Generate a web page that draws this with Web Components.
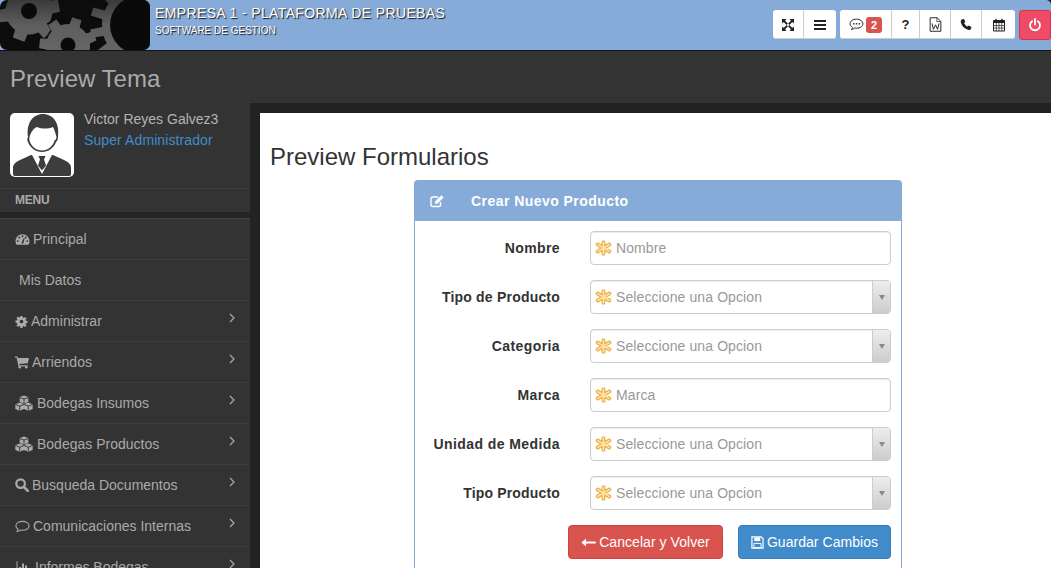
<!DOCTYPE html>
<html lang="es">
<head>
<meta charset="UTF-8">
<title>Preview Tema</title>
<style>
  html, body { margin: 0; height: 100%; overflow: hidden; background: #222; }
  body { font: 14px "Liberation Sans", Arial, sans-serif; color: #333; }
</style>
</head>
<body>
<app-shell>
  <app-header slot="header" title-text="EMPRESA 1 - PLATAFORMA DE PRUEBAS" subtitle="SOFTWARE DE GESTION"></app-header>
  <page-title slot="title">Preview Tema</page-title>
  <side-menu slot="side" user="Victor Reyes Galvez3" role="Super Administrador">
    <menu-item icon="dashboard" gap="3">Principal</menu-item>
    <menu-item pad="19">Mis Datos</menu-item>
    <menu-item icon="cog" gap="3" arrow>Administrar</menu-item>
    <menu-item icon="cart" gap="3" arrow>Arriendos</menu-item>
    <menu-item icon="cubes" gap="4" arrow>Bodegas Insumos</menu-item>
    <menu-item icon="cubes" gap="4" arrow>Bodegas Productos</menu-item>
    <menu-item icon="search" gap="3" arrow>Busqueda Documentos</menu-item>
    <menu-item icon="comment" gap="3" arrow>Comunicaciones Internas</menu-item>
    <menu-item icon="chart" gap="4" arrow>Informes Bodegas</menu-item>
  </side-menu>
  <form-page heading="Preview Formularios">
    <form-panel heading="Crear Nuevo Producto">
      <form-field label="Nombre" placeholder="Nombre"></form-field>
      <form-field label="Tipo de Producto" spacing=".2" placeholder="Seleccione una Opcion" select></form-field>
      <form-field label="Categoria" placeholder="Seleccione una Opcion" select></form-field>
      <form-field label="Marca" placeholder="Marca"></form-field>
      <form-field label="Unidad de Medida" spacing=".42" placeholder="Seleccione una Opcion" select></form-field>
      <form-field label="Tipo Producto" spacing=".17" placeholder="Seleccione una Opcion" select></form-field>
      <div slot="actions">
        <action-button kind="danger" icon="arrowleft">Cancelar y Volver</action-button>
        <action-button kind="primary" icon="save">Guardar Cambios</action-button>
      </div>
    </form-panel>
  </form-page>
</app-shell>

<script>
const ICONS = {
  expand: '<path d="M1 1h4.600L4 2.700l2.900 2.900L5.600 6.900 2.700 4 1 5.600zM13 1v4.600L11.300 4 8.400 6.900 7.100 5.600 10 2.700 8.400 1zM1 13V8.400L2.700 10l2.900-2.900 1.300 1.300L4 11.300 5.600 13zM13 13H8.400l1.600-1.700-2.900-2.900 1.300-1.300 2.900 2.900L13 8.400z"/>',
  bars: '<rect x="1" y="2" width="12" height="2"/><rect x="1" y="6" width="12" height="2"/><rect x="1" y="10" width="12" height="2"/>',
  bubble: '<path d="M7 2C3.600 2 1 3.900 1 6.300c0 1.400.9 2.600 2.300 3.400-.1.8-.5 1.500-1 2 1.200-.2 2.200-.7 3-1.400.5.100 1.100.2 1.700.2 3.400 0 6-1.900 6-4.200S10.400 2 7 2z" fill="none" stroke="currentColor" stroke-width=".9"/><circle cx="4.400" cy="6.300" r=".8"/><circle cx="7" cy="6.300" r=".8"/><circle cx="9.600" cy="6.300" r=".8"/>',
  word: '<path d="M2 .7h6.500l3.500 3.400v9.200H2z" fill="none" stroke="currentColor" stroke-width=".9"/><path d="M8.300.7v3.600H12" fill="none" stroke="currentColor" stroke-width=".7"/><path d="M3.700 6l1.400 5.500 1.900-4.200 1.900 4.200L10.300 6" fill="none" stroke="currentColor" stroke-width=".9"/>',
  phone: '<path d="M3.300 1.300 5 .9l1.400 3-1.300 1c.6 1.500 1.800 2.900 3.300 3.700l1.200-1.200 2.900 1.600-.5 1.800c-.3.900-1.200 1.500-2.200 1.300C5.500 11.200 2.300 7.600 1.700 3.600c-.2-1 .6-2 1.600-2.300z"/>',
  calendar: '<path d="M1.500 2.500h11v10.500h-11z" fill="none" stroke="currentColor"/><rect x="1.500" y="2.500" width="11" height="2.500"/><rect x="3.300" y=".8" width="1.400" height="2.600"/><rect x="9.300" y=".8" width="1.400" height="2.600"/><path d="M1.500 7.500h11M1.500 10h11M4.300 5v8M7 5v8M9.700 5v8" stroke="currentColor" stroke-width=".7" fill="none"/>',
  power: '<path d="M4.100 3.200a5 5 0 1 0 5.800 0" fill="none" stroke="currentColor" stroke-width="1.800" stroke-linecap="round"/><path d="M7 1v5.500" stroke="currentColor" stroke-width="1.800" stroke-linecap="round"/>',
  dashboard: '<path d="M7 2C3.300 2 .5 4.900.5 8.600c0 1.100.2 2 .7 2.900.1.200.3.300.5.300h10.600c.2 0 .4-.1.500-.3.500-.9.700-1.800.7-2.900C13.500 4.900 10.700 2 7 2z"/><g fill="#333"><circle cx="2.600" cy="8.500" r=".9"/><circle cx="4" cy="5.200" r=".9"/><circle cx="7" cy="3.900" r=".9"/><circle cx="11.400" cy="8.500" r=".9"/><circle cx="10" cy="5.200" r=".9"/><path d="M6 10.300 8.200 5.500l.8.300L7.700 11z"/></g>',
  cog: '<path d="M5.900 1h2.200l.3 1.700 1 .4 1.400-1 1.600 1.600-1 1.400.4 1 1.700.3v2.200l-1.700.3-.4 1 1 1.400-1.600 1.600-1.400-1-1 .4-.3 1.700H5.900l-.3-1.700-1-.4-1.400 1-1.600-1.600 1-1.400-.4-1L.5 8.100V5.900l1.700-.3.4-1-1-1.400 1.600-1.600 1.400 1 1-.4zM7 5a2 2 0 1 0 0 4 2 2 0 0 0 0-4z" fill-rule="evenodd"/>',
  cart: '<path d="M0 1.500h2.500l.4 1.400H14l-1.200 5.400-8.500.8.300 1.100h8v1.300H3.500L1.600 2.800H0z"/><circle cx="4.700" cy="12.300" r="1.300"/><circle cx="11.300" cy="12.300" r="1.300"/>',
  cubes: '<path d="M8 .3 11.800 1.700v4.500L8 7.600 4.200 6.200V1.700z"/><path d="M4.200 6.600 8 8v4.400l-3.800 1.400-3.900-1.400V8z"/><path d="M11.800 6.600 15.700 8v4.400l-3.900 1.400L8 12.400V8z"/><path d="M4.200 2.100 8 3.500l3.800-1.400M8 3.500v4M.3 8.300l3.900 1.500L8 8.300M4.200 9.800v4M8 8.300l3.800 1.500 3.900-1.500M11.800 9.800v4" stroke="#333" stroke-width=".8" fill="none"/>',
  search: '<circle cx="5.600" cy="5.600" r="4.300" fill="none" stroke="currentColor" stroke-width="2.200"/><path d="m9 9 3.800 3.800" stroke="currentColor" stroke-width="2.600" stroke-linecap="round"/>',
  comment: '<path d="M7 2.200C3.500 2.200.8 4 .8 6.400c0 1.300.8 2.400 2.100 3.200-.1.900-.5 1.500-1 2.100 1.200-.2 2.200-.7 3-1.400.6.100 1.300.2 2.100.2 3.500 0 6.200-1.800 6.200-4.100S10.500 2.200 7 2.200z" fill="none" stroke="currentColor"/>',
  chart: '<path d="M.5 1.500h1v10.500h12.500v1H.5z"/><rect x="3" y="7" width="2" height="4"/><rect x="6" y="3.500" width="2" height="7.500"/><rect x="9" y="5.500" width="2" height="5.500"/>',
  edit: '<path d="M10.500 8v3a1.500 1.500 0 0 1-1.500 1.500H2.500A1.500 1.500 0 0 1 1 11V4.500A1.500 1.500 0 0 1 2.500 3h5.500" fill="none" stroke="currentColor" stroke-width="1.400"/><path d="M11.300 1.200 13.600 3.500 7.400 9.700H5V7.400z"/>',
  arrowleft: '<path d="M4.700 3.300 .3 7l4.400 3.700V8h9V6h-9z"/>',
  save: '<path d="M1 1h10l2 2v10H1z" fill="none" stroke="currentColor" stroke-width="1.300"/><path d="M3.500 1.500h6.500v4H3.500z"/><path d="M3.200 8h7.600v4.500H3.200z" fill="none" stroke="currentColor"/>'
}

function icon(name, w, h) {
  return `<svg width="${w}" height="${h}" viewBox="0 0 ${name == 'cubes' ? 16 : 14} 14" fill="currentColor" style="display:block;flex:none">${ICONS[name]}</svg>`
}

// builds the toothed outline used by the logo
function gearPath(cx, cy, r, teeth, start) {
  let d = ''
  const step = Math.PI * 2 / teeth
  for (let i = 0; i < teeth; i++) {
    const a = i * step + start * Math.PI / 180
    const pts = [[r * 0.76, a - step * 0.5], [r * 0.76, a - step * 0.27], [r, a - step * 0.19], [r, a + step * 0.19], [r * 0.76, a + step * 0.27]]
    pts.forEach((p, j) => {
      d += (i == 0 && j == 0 ? 'M' : 'L') + (cx + p[0] * Math.cos(p[1])).toFixed(1) + ' ' + (cy + p[0] * Math.sin(p[1])).toFixed(1)
    })
  }
  return d + 'Z'
}

class BaseEl extends HTMLElement {
  constructor() {
    super()
    this.attachShadow({ mode: 'open' })
  }
  attr(n, d = '') { return this.getAttribute(n) ?? d }
}

class AppShell extends BaseEl {
  connectedCallback() {
    this.shadowRoot.innerHTML = `
      <style>
        :host { display: flex; flex-direction: column; height: 100vh; overflow: hidden; }
        .body { flex: 1; display: flex; min-height: 0; }
        .side { flex: none; width: 250px; }
        .main { flex: 1; min-width: 0; }
      </style>
      <slot name="header"></slot>
      <slot name="title"></slot>
      <div class="body">
        <div class="side"><slot name="side"></slot></div>
        <div class="main"><slot></slot></div>
      </div>`
  }
}

class AppHeader extends BaseEl {
  connectedCallback() {
    const b = (name, w, extra = '', size = 14) => `<span class="b" style="width:${w}px">${name ? icon(name, size, size) : ''}${extra}</span>`
    this.shadowRoot.innerHTML = `
      <style>
        :host { display: block; background: #222; flex: none; }
        .bar { height: 50px; background: #86abd9; display: flex; align-items: center; border-top-right-radius: 5px; border-bottom: 1px solid #111; }
        .logo { flex: none; display: block; margin-right: 5px; }
        .text { flex: 1; align-self: flex-start; padding-top: 6px; color: #fff; text-shadow: 1px 1px 1px #111; line-height: 1; }
        .t1 { font-size: 14px; letter-spacing: .37px; }
        .t2 { font-size: 10px; margin-top: 6px; }
        .tools { display: flex; gap: 4px; }
        .g { display: flex; height: 29px; background: #fff; border-radius: 3px; box-shadow: inset 0 -1px 0 #ccc; color: #222; }
        .b { display: flex; align-items: center; justify-content: center; border-right: 1px solid #ccc; box-sizing: border-box; gap: 2px; font-weight: bold; }
        .b:last-child { border-right: 0; }
        .badge { background: #d9534f; color: #fff; border-radius: 3px; width: 16px; height: 16px; font: bold 11px/16px "Liberation Sans", sans-serif; text-align: center; }
        .q { font-size: 13px; }
        .off { width: 32px; height: 30px; background: #ee4c66; color: #fff; border: 1px solid #d8334f; box-sizing: border-box; border-radius: 3px; display: flex; align-items: center; justify-content: center; }
      </style>
      <div class="bar">
        <svg class="logo" width="150" height="50" viewBox="0 0 150 50">
          <defs>
            <linearGradient id="lg" x1="0" y1="0" x2="0" y2="50" gradientUnits="userSpaceOnUse"><stop offset="0" stop-color="#3a3a3a"/><stop offset=".5" stop-color="#5e5e5e"/><stop offset="1" stop-color="#666"/></linearGradient>
            <clipPath id="lc"><rect width="150" height="50" rx="7"/></clipPath>
          </defs>
          <g clip-path="url(#lc)">
            <rect width="150" height="50" fill="#0c0c0c"/>
            <path d="${gearPath(29, 11, 31, 6, 110)}" fill="url(#lg)"/>
            <circle cx="29" cy="11" r="8" fill="#0a0a0a"/>
            <path d="${gearPath(68, 46, 31, 7, -72)}" fill="#0c0c0c"/>
            <path d="${gearPath(68, 46, 29, 7, -72)}" fill="url(#lg)"/>
            <circle cx="68" cy="45" r="7.500" fill="#0a0a0a"/>
            <path d="${gearPath(140, 25, 50, 14, 170)}" fill="url(#lg)"/>
            <circle cx="139" cy="25" r="29" fill="#0a0a0a"/>
          </g>
        </svg>
        <div class="text"><div class="t1">${this.attr('title-text')}</div><div class="t2">${this.attr('subtitle')}</div></div>
        <div class="tools">
          <div class="g">${b('expand', 31)}${b('bars', 32)}</div>
          <div class="g">${b('bubble', 52, '<span class="badge">2</span>', 15)}${b('', 28, '<span class="q">?</span>')}${b('word', 31, '', 15)}${b('phone', 31)}${b('calendar', 33)}</div>
          <div class="off">${icon('power', 14, 14)}</div>
        </div>
      </div>`
  }
}

class PageTitle extends BaseEl {
  connectedCallback() {
    this.shadowRoot.innerHTML = `
      <style>
        :host { display: block; flex: none; height: 52px; line-height: 56px; background: #333; color: #aaa; font-size: 24px; padding-left: 10px; }
      </style><slot></slot>`
  }
}

class SideMenu extends BaseEl {
  connectedCallback() {
    this.shadowRoot.innerHTML = `
      <style>
        :host { display: block; height: 100%; background: #333; color: #aaa; }
        .user { display: flex; height: 85px; box-sizing: border-box; padding: 0 10px; gap: 10px; }
        .user svg { display: block; flex: none; margin-top: 10px; }
        .info { margin-top: 6px; }
        .name { line-height: 21px; color: #b4b4b4; }
        .role { color: #428bca; line-height: 21px; letter-spacing: .1px; }
        .menu { height: 24px; box-sizing: border-box; border-top: 1px solid #3d3d3d; padding-left: 15px; font: bold 12px/23px "Liberation Sans", sans-serif; letter-spacing: -.2px; }
        .gap { height: 6px; background: #242424; border-bottom: 1px solid #444; }
      </style>
      <div class="user">
        <svg width="64" height="64" viewBox="0 0 64 64">
          <rect width="64" height="64" rx="5" fill="#fff"/>
          <path d="M3 61v-6c0-4 3-6 7-8l11-5h22l11 5c4 2 7 4 7 8v6c0 1-.5 2-2 2H5c-1.500 0-2-1-2-2z" fill="#3d3d3d"/>
          <path d="M21 40h22l-11 21z" fill="#fff"/>
          <path d="M28.500 43h7l-1.500 3.500 2 6-4 5-4-5 2-6z" fill="#3d3d3d"/>
          <path d="M18 24C16 10 23 1 33 1c10 0 17 9 15 23 0 3-1 4-2 5-2 6-8 10-14 10s-12-4-14-10c-1-1-1-3 0-5z" fill="#3d3d3d"/>
          <path d="M19.500 24c1-4 4-9 7.500-10 5 2 11 2 16 0 1.500 3 2.500 6 3.500 10 0 2-1 3-2 3.500-1.500 6-7 10-12.500 10S21 33.500 19.500 27.500c-.5-.5 0-2 0-3.500z" fill="#fff"/>
        </svg>
        <div class="info"><div class="name">${this.attr('user')}</div><div class="role">${this.attr('role')}</div></div>
      </div>
      <div class="menu">MENU</div>
      <div class="gap"></div>
      <slot></slot>`
  }
}

class MenuItem extends BaseEl {
  connectedCallback() {
    const name = this.attr('icon')
    const sizes = { cubes: [18, 16], dashboard: [15, 15], cog: [13, 13], chart: [16, 14], cart: [14, 14], search: [14, 14], comment: [15, 15] }
    const s = sizes[name] || [14, 14]
    this.shadowRoot.innerHTML = `
      <style>
        :host { display: flex; align-items: center; height: 41px; box-sizing: border-box; border-bottom: 1px solid #3e3e3e; color: #aaa; padding: 0 15px 0 ${this.attr('pad', '15')}px; gap: ${this.attr('gap', '0')}px; font-size: 14px; }
        .l { flex: 1; }
        .chev { margin: -7px 0 0; }
      </style>
      ${name ? icon(name, s[0], s[1]) : ''}
      <span class="l"><slot></slot></span>
      ${this.hasAttribute('arrow') ? '<svg class="chev" width="6" height="10" viewBox="0 0 6 10"><path d="M1 1l4 4-4 4" fill="none" stroke="#aaa" stroke-width="1.200"/></svg>' : ''}`
  }
}

class FormPage extends BaseEl {
  connectedCallback() {
    this.shadowRoot.innerHTML = `
      <style>
        :host { display: block; height: 100%; box-sizing: border-box; padding: 10px 0 0 10px; background: #222; }
        .sheet { background: #fff; height: 100%; padding: 31px 10px 0; box-sizing: border-box; }
        h1 { margin: 0 0 10px; font: 24px/26px "Liberation Sans", sans-serif; color: #333; }
        .wrap { margin-left: 144px; }
      </style>
      <div class="sheet">
        <h1>${this.attr('heading')}</h1>
        <div class="wrap"><slot></slot></div>
      </div>`
  }
}

class FormPanel extends BaseEl {
  connectedCallback() {
    this.shadowRoot.innerHTML = `
      <style>
        :host { display: block; width: 488px; box-sizing: border-box; border: 1px solid #86abd9; border-bottom: 0; border-radius: 4px 4px 0 0; }
        .head { height: 40px; background: #86abd9; color: #fff; display: flex; align-items: center; padding-left: 15px; font: bold 14px "Liberation Sans", sans-serif; letter-spacing: .45px; }
        .head svg { margin-right: 27px; }
        .body { padding: 10px 10px 20px 0; display: flex; flex-direction: column; gap: 15px; }
        ::slotted([slot=actions]) { display: flex; gap: 15px; justify-content: flex-end; }
      </style>
      <div class="head">${icon('edit', 14, 14)}${this.attr('heading')}</div>
      <div class="body">
        <slot></slot>
        <slot name="actions"></slot>
      </div>`
  }
}

class FormField extends BaseEl {
  connectedCallback() {
    const sel = this.hasAttribute('select')
    this.shadowRoot.innerHTML = `
      <style>
        :host { display: grid; grid-template-columns: 145px 301px; column-gap: 30px; align-items: center; height: 34px; }
        label { text-align: right; font: bold 14px "Liberation Sans", sans-serif; color: #333; letter-spacing: ${this.attr('spacing', '.4')}px; }
        .box { display: flex; align-items: center; height: 34px; box-sizing: border-box; border: 1px solid #ccc; border-radius: 4px; overflow: hidden; background: #fff; padding-left: 4px; box-shadow: inset 0 1px 1px rgba(0,0,0,.08); }
        .ph { flex: 1; margin-left: 4px; color: #999; font-size: 14px; letter-spacing: .1px; }
        .arrow { flex: none; width: 17px; height: 100%; border-left: 1px solid #ccc; background: linear-gradient(#eee, #ccc); display: flex; align-items: center; justify-content: center; }
        .arrow i { width: 0; height: 0; border: 3.500px solid transparent; border-top: 5px solid #888; border-bottom: 0; }
      </style>
      <label>${this.attr('label')}</label>
      <div class="box">
        <svg width="17" height="16" viewBox="0 0 17 16" style="flex:none;display:block">
          <g stroke="#eeb04e" stroke-width="4" stroke-linecap="round"><path d="M8.500 2.200v11.600M2.700 4.600l11.600 6.800M14.300 4.600l-11.600 6.800"/></g>
          <g stroke="#fde6a8" stroke-width="1.500" stroke-linecap="round"><path d="M8.500 2.200v11.600M2.700 4.600l11.600 6.800M14.300 4.600l-11.600 6.800"/></g>
        </svg>
        <span class="ph">${this.attr('placeholder')}</span>
        ${sel ? '<span class="arrow"><i></i></span>' : ''}
      </div>`
  }
}

class ActionButton extends BaseEl {
  connectedCallback() {
    const danger = this.attr('kind') == 'danger'
    const size = danger ? 15 : 13
    this.shadowRoot.innerHTML = `
      <style>
        :host { display: flex; align-items: center; justify-content: center; gap: 3px; height: 34px; box-sizing: border-box; width: ${danger ? 155 : 153}px; border-radius: 4px; color: #fff; font-size: 14px; letter-spacing: .05px; background: ${danger ? '#d9534f' : '#428bca'}; border: 1px solid ${danger ? '#d43f3a' : '#357ebd'}; }
      </style>
      ${icon(this.attr('icon'), size, size)}<slot></slot>`
  }
}

customElements.define('app-shell', AppShell)
customElements.define('app-header', AppHeader)
customElements.define('page-title', PageTitle)
customElements.define('side-menu', SideMenu)
customElements.define('menu-item', MenuItem)
customElements.define('form-page', FormPage)
customElements.define('form-panel', FormPanel)
customElements.define('form-field', FormField)
customElements.define('action-button', ActionButton)
</script>
</body>
</html>
